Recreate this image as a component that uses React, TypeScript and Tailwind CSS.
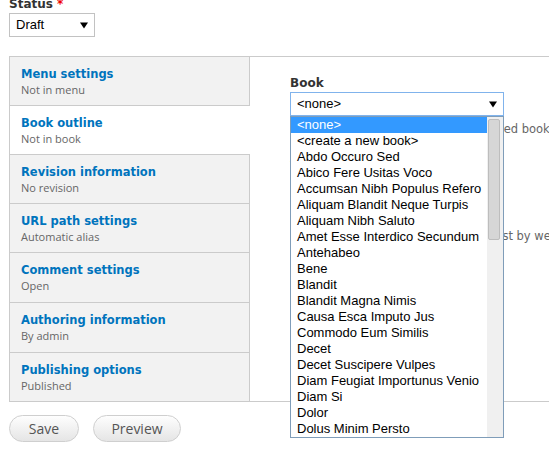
import React from "react";

const tabs = [
  { title: "Menu settings", summary: "Not in menu", h: "h-[49px]" },
  { title: "Book outline", summary: "Not in book", h: "h-[49px]", active: true },
  { title: "Revision information", summary: "No revision", h: "h-[49px]" },
  { title: "URL path settings", summary: "Automatic alias", h: "h-[49px]" },
  { title: "Comment settings", summary: "Open", h: "h-[50px]" },
  { title: "Authoring information", summary: "By admin", h: "h-[50px]" },
  { title: "Publishing options", summary: "Published", h: "h-[48px]" },
];

const books = [
  "<none>",
  "<create a new book>",
  "Abdo Occuro Sed",
  "Abico Fere Usitas Voco",
  "Accumsan Nibh Populus Refero",
  "Aliquam Blandit Neque Turpis",
  "Aliquam Nibh Saluto",
  "Amet Esse Interdico Secundum",
  "Antehabeo",
  "Bene",
  "Blandit",
  "Blandit Magna Nimis",
  "Causa Esca Imputo Jus",
  "Commodo Eum Similis",
  "Decet",
  "Decet Suscipere Vulpes",
  "Diam Feugiat Importunus Venio",
  "Diam Si",
  "Dolor",
  "Dolus Minim Persto",
];

const Arrow = () => (
  <svg width="8" height="7" viewBox="0 0 8 7" className="shrink-0">
    <path d="M0 0.5 H8 L4 6.5 Z" fill="#000" />
  </svg>
);

export default function App() {
  return (
    <div className="relative w-[549px] h-[462px] overflow-hidden bg-white">
      {/* Status */}
      <div className="pl-[9px] -mt-[4px]">
        <div className="h-[17px] font-['DejaVu_Sans',sans-serif] text-[12px] font-bold leading-[16px] text-[#333]">
          Status <span className="text-[#e00] font-bold">*</span>
        </div>
        <div className="flex h-[24px] w-[86px] items-center justify-between border border-[#c2c2c2] bg-white pl-[6px] pr-[6px] font-['Liberation_Sans',sans-serif] text-[13px] text-black">
          <span>Draft</span>
          <Arrow />
        </div>
      </div>

      {/* Vertical tabs */}
      <div className="ml-[9px] mt-[19px] flex border-y border-l border-[#cbcbcb]">
        <ul className="w-[240px] shrink-0">
          {tabs.map((t, i) => (
            <li
              key={t.title}
              className={`${t.h} pl-[11px] pt-[9px] ${i < tabs.length - 1 ? "border-b" : ""} border-[#cbcbcb] ${
                t.active ? "bg-white" : "bg-[#f2f2f2] border-r"
              }`}
            >
              <div className="font-['DejaVu_Sans',sans-serif] text-[11.5px] font-bold leading-[16px] text-[#0074bd]">
                {t.title}
              </div>
              <div className="font-['Open_Sans',sans-serif] text-[11px] leading-[16px] text-[#666]">
                {t.summary}
              </div>
            </li>
          ))}
        </ul>

        <div className="flex-1 pl-[40px] pt-[17px]">
          <div className="font-['DejaVu_Sans',sans-serif] text-[12px] font-bold leading-[18px] text-[#333]">
            Book
          </div>
          <div className="relative w-[214px]">
            <div className="flex h-[24px] items-center justify-between border border-[#80b3ec] bg-white pl-[6px] pr-[6px] font-['Liberation_Sans',sans-serif] text-[13px] text-black">
              <span>&lt;none&gt;</span>
              <Arrow />
            </div>

            {/* open dropdown */}
            <div className="absolute left-0 top-full z-10 flex h-[322px] w-[214px] border border-[#7f9db9] bg-white">
              <ul className="flex-1 font-['Liberation_Sans',sans-serif] text-[13px] leading-[16px] text-black">
                {books.map((b, i) => (
                  <li
                    key={b}
                    className={`h-[16px] whitespace-nowrap pl-[6px] ${i === 0 ? "bg-[#3399ff] text-white" : ""}`}
                  >
                    {b}
                  </li>
                ))}
              </ul>
              <div className="w-[16px] bg-[#f0f0f0] pt-[2px] pl-[1px]">
                <div className="h-[121px] w-[12px] rounded-[2px] border border-[#bdbdbd] bg-[#d6d6d6]" />
              </div>
            </div>
          </div>

          <p className="mt-[5px] pl-[3px] whitespace-nowrap font-['DejaVu_Sans',sans-serif] text-[11.5px] leading-[16px] text-[#666]">
            Your page will be a part of the selected book.
          </p>
          <div className="mt-[20px] font-['DejaVu_Sans',sans-serif] text-[12px] font-bold leading-[18px] text-[#333]">
            Weight
          </div>
          <div className="h-[24px] w-[60px] border border-[#c2c2c2]" />
          <p className="mt-[29px] whitespace-nowrap font-['DejaVu_Sans',sans-serif] text-[11.5px] leading-[16px] text-[#666]">
            Pages at a given level are ordered first by weight and then by title.
          </p>
        </div>
      </div>

      {/* Actions */}
      <div className="ml-[9px] mt-[13px] flex gap-[14px] font-['Open_Sans',sans-serif] text-[14px] text-[#555]">
        <button className="h-[27px] w-[70px] rounded-full border border-[#cfcfcf] bg-gradient-to-b from-[#fefefe] to-[#e5e5e5]">
          Save
        </button>
        <button className="h-[27px] w-[88px] rounded-full border border-[#cfcfcf] bg-gradient-to-b from-[#fefefe] to-[#e5e5e5]">
          Preview
        </button>
      </div>
    </div>
  );
}
